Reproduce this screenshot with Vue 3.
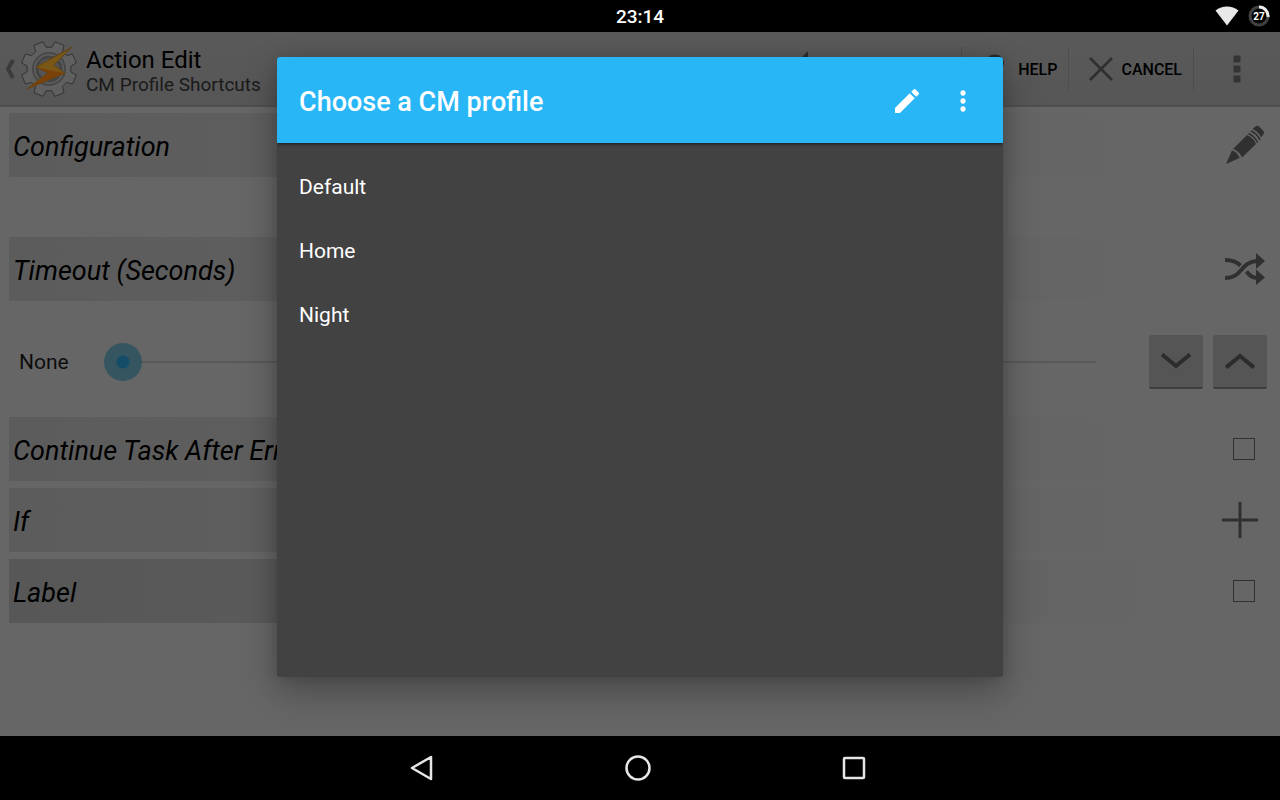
<template>
  <div class="screen">
    <!-- Status bar -->
    <header class="status-bar">
      <time class="clock">23:14</time>
      <div class="status-icons">
        <svg width="24" height="20" viewBox="0 0 24 20" aria-hidden="true">
          <path d="M0.5 4.5C7-1 17-1 23.500 4.500L12 19.500Z" fill="#e9e9e9" />
        </svg>
        <svg width="22" height="22" viewBox="0 0 22 22" role="img" aria-label="Battery 27%">
          <circle cx="11" cy="11" r="9" fill="none" stroke="#404040" stroke-width="3" />
          <path d="M11 2A9 9 0 0 1 20 12" fill="none" stroke="#eee" stroke-width="3" />
          <text x="11" y="15" text-anchor="middle" class="battery-text">27</text>
        </svg>
      </div>
    </header>

    <div class="content">
      <!-- Action bar -->
      <div class="action-bar">
        <a href="#" class="up-link" aria-label="Navigate up">
          <svg class="up-arrow" width="10" height="20" viewBox="0 0 10 20">
            <path d="M8 1L3 10L8 19" fill="none" stroke="#3b3b3b" stroke-width="4" />
          </svg>
          <svg width="58" height="58" viewBox="0 0 58 58">
            <path
              :d="gearPath"
              fill="#606060"
              stroke="#333"
              stroke-width="1"
              stroke-linejoin="round"
            />
            <circle cx="29" cy="29" r="16" fill="none" stroke="#484848" stroke-width="2" />
            <circle cx="29" cy="29" r="12" fill="#555" stroke="#454545" stroke-width="3" />
            <path d="M52 7L16 27L28 33L7 49L45 33L34 25Z" fill="#7a5717" stroke="#5b4319" />
            <path d="M18 28L45 33L7 49L28 33Z" fill="#7a4209" />
          </svg>
        </a>
        <div class="titles">
          <h1 class="title">Action Edit</h1>
          <p class="subtitle">CM Profile Shortcuts</p>
        </div>
        <div class="bar-actions">
          <button type="button" class="bar-button bar-back" aria-label="Back">
            <svg width="18" height="36" viewBox="0 0 18 36">
              <path d="M18 0V36L0 18Z" fill="#2c2c2c" />
            </svg>
          </button>
          <button type="button" class="bar-button">
            <svg width="28" height="30" viewBox="0 0 28 30">
              <path
                d="M6 10C6 4 9 2.500 13 2.500S20 5 20 9C20 14 13 14 13 20M13 24V28"
                fill="none"
                stroke="#2f2a28"
                stroke-width="4"
              />
            </svg>
            <span>HELP</span>
          </button>
          <button type="button" class="bar-button">
            <svg width="24" height="24" viewBox="0 0 24 24">
              <path d="M1 1L23 23M23 1L1 23" stroke="#2f2f2f" stroke-width="2.500" />
            </svg>
            <span>CANCEL</span>
          </button>
          <button type="button" class="bar-button bar-more" aria-label="More options">
            <svg width="8" height="28" viewBox="0 0 8 28">
              <path d="M0.500 0.500h7v7h-7zM0.500 10.500h7v7h-7zM0.500 20.500h7v7h-7z" fill="#343434" />
            </svg>
          </button>
        </div>
      </div>

      <!-- Form -->
      <main class="form">
        <section class="row">
          <h2 class="row-title">Configuration</h2>
          <button type="button" class="row-button" aria-label="Edit configuration">
            <svg width="40" height="40" viewBox="0 0 40 40" fill="#303030">
              <path d="M1 39L7 25.500C10.500 26.500 13.500 29.500 14.500 33Z" />
              <path d="M8 24L22 10C26 11.500 29.500 15 31 19L17 32.500C15.500 28.500 12 25 8 24Z" />
              <path
                d="M23.500 8.500Q29.500 11 32.500 17.500M26 6Q32 8.500 35 15"
                fill="none"
                stroke="#303030"
                stroke-width="1.600"
              />
              <path d="M27.500 4L30 2Q32 0 34 1.500L38 5.500Q40 7.500 38 10L36 12.500Q33.500 6.500 27.500 4Z" />
            </svg>
          </button>
        </section>

        <section class="row row-timeout">
          <h2 class="row-title">Timeout (Seconds)</h2>
          <button type="button" class="row-button" aria-label="Use variable">
            <svg width="40" height="32" viewBox="0 0 40 32">
              <g fill="none" stroke="#303030" stroke-width="4">
                <path d="M0 7C7 7 11 8 15.500 12.500" />
                <path d="M0 25C18 25 15 9 32 8" />
                <path d="M21.500 18.500C25 23 27 24.500 32 25" />
              </g>
              <path d="M31 0L40 8L31 16ZM31 16.500L40 24.500L31 32Z" fill="#303030" />
            </svg>
          </button>
        </section>

        <div class="seek">
          <label for="timeout" class="seek-label">None</label>
          <input id="timeout" v-model="timeout" type="range" min="0" max="100" class="seek-bar" />
          <div class="steppers">
            <button type="button" class="stepper" aria-label="Decrease" @click="step(-1)">
              <svg width="30" height="16" viewBox="0 0 30 16">
                <path d="M1 1.500L15 13L29 1.500" />
              </svg>
            </button>
            <button type="button" class="stepper" aria-label="Increase" @click="step(1)">
              <svg width="30" height="16" viewBox="0 0 30 16">
                <path d="M1 14.500L15 3L29 14.500" />
              </svg>
            </button>
          </div>
        </div>

        <section class="row">
          <label for="continue" class="row-title">Continue Task After Error</label>
          <input id="continue" v-model="continueAfterError" type="checkbox" class="tick" />
        </section>

        <section class="row">
          <h2 class="row-title">If</h2>
          <button type="button" class="row-button row-add" aria-label="Add condition">
            <svg width="36" height="36" viewBox="0 0 36 36">
              <path d="M18 0V36M0 18H36" stroke="#303030" stroke-width="3" />
            </svg>
          </button>
        </section>

        <section class="row row-dark">
          <label for="label" class="row-title">Label</label>
          <input id="label" v-model="hasLabel" type="checkbox" class="tick" />
        </section>
      </main>

      <!-- Profile dialog -->
      <div class="overlay">
        <div class="dialog" role="dialog" aria-labelledby="dialog-title">
          <div class="dialog-header">
            <h2 id="dialog-title" class="dialog-title">Choose a CM profile</h2>
            <button type="button" class="dialog-button" aria-label="Edit profiles">
              <svg width="32" height="32" viewBox="0 0 24 24" fill="#fff">
                <path
                  d="M3 17.250V21h3.750L17.810 9.940l-3.750-3.750L3 17.250zM20.710 7.040c.390-.390.390-1.020 0-1.410l-2.340-2.340c-.390-.390-1.020-.390-1.410 0l-1.830 1.830 3.750 3.750 1.830-1.830z"
                />
              </svg>
            </button>
            <button type="button" class="dialog-button" aria-label="More options">
              <svg width="32" height="32" viewBox="0 0 24 24" fill="#fff">
                <path
                  d="M12 8c1.100 0 2-.900 2-2s-.900-2-2-2-2 .900-2 2 .900 2 2 2zm0 2c-1.100 0-2 .900-2 2s.900 2 2 2 2-.900 2-2-.900-2-2-2zm0 6c-1.100 0-2 .900-2 2s.900 2 2 2 2-.900 2-2-.900-2-2-2z"
                />
              </svg>
            </button>
          </div>
          <ul class="profiles">
            <li v-for="profile in profiles" :key="profile">
              <button type="button" class="profile">{{ profile }}</button>
            </li>
          </ul>
        </div>
      </div>
    </div>

    <!-- Navigation bar -->
    <nav class="nav-bar">
      <button type="button" class="nav-button" aria-label="Back">
        <svg width="26" height="26" viewBox="0 0 26 26">
          <path d="M3 13L22 2V24Z" />
        </svg>
      </button>
      <button type="button" class="nav-button" aria-label="Home">
        <svg width="26" height="26" viewBox="0 0 26 26">
          <circle cx="13" cy="13" r="11.500" />
        </svg>
      </button>
      <button type="button" class="nav-button" aria-label="Recent apps">
        <svg width="26" height="26" viewBox="0 0 26 26">
          <rect x="3" y="3" width="20" height="20" rx="1" />
        </svg>
      </button>
    </nav>
  </div>
</template>

<script setup>
import { ref } from 'vue'

const profiles = ['Default', 'Home', 'Night']

const timeout = ref(0)
const continueAfterError = ref(false)
const hasLabel = ref(false)

const step = (delta) => {
  timeout.value = Math.min(100, Math.max(0, Number(timeout.value) + delta))
}

// Eight-toothed gear around (29, 29)
const buildGear = () => {
  const points = []
  const add = (radius, degrees) => {
    const a = (degrees * Math.PI) / 180
    points.push(`${(29 + radius * Math.cos(a)).toFixed(2)} ${(29 + radius * Math.sin(a)).toFixed(2)}`)
  }
  for (let i = 0; i < 8; i++) {
    const mid = i * 45 + 22.5
    add(22, mid - 15)
    add(28, mid - 10)
    add(28, mid + 10)
    add(22, mid + 15)
  }
  return `M${points.join('L')}Z`
}

const gearPath = buildGear()
</script>

<style>
body {
  margin: 0;
  background: #000;
}
</style>

<style scoped>
.screen {
  display: flex;
  flex-direction: column;
  min-height: 100vh;
  font-family: Roboto, sans-serif;
  color: #000;
}

h1,
h2,
p,
ul {
  margin: 0;
  padding: 0;
}

button {
  display: flex;
  align-items: center;
  padding: 0;
  border: 0;
  background: none;
  font-family: inherit;
  cursor: pointer;
}

/* Status bar */
.status-bar {
  display: grid;
  grid-template-columns: 1fr auto 1fr;
  align-items: center;
  height: 32px;
  background: #000;
}

.clock {
  grid-column: 2;
  color: #fff;
  font-size: 19px;
  font-weight: 500;
}

.status-icons {
  display: flex;
  align-items: center;
  justify-content: flex-end;
  gap: 9px;
  padding-right: 10px;
}

.battery-text {
  fill: #fff;
  font-size: 10px;
  font-weight: 700;
}

/* Content */
.content {
  position: relative;
  flex: 1;
  background: #666;
}

.action-bar {
  display: flex;
  align-items: center;
  box-sizing: border-box;
  height: 75px;
  border-bottom: 2px solid #4f4f4f;
  background: linear-gradient(#5a5a5a, #565656);
}

.up-link {
  display: flex;
  align-items: center;
  gap: 5px;
  padding-left: 5px;
}

.titles {
  flex: 1;
  padding: 4px 0 0 8px;
}

.title {
  font-size: 24px;
  font-weight: 400;
  line-height: 28px;
}

.subtitle {
  color: #1a1a1a;
  font-size: 19px;
  line-height: 22px;
}

.bar-actions {
  display: flex;
}

.bar-button {
  gap: 8px;
  box-sizing: border-box;
  height: 44px;
  padding: 0 11px 0 20px;
  border-right: 1px solid #4d4d4d;
  color: #000;
  font-size: 16px;
  font-weight: 500;
}

.bar-button span {
  padding-top: 2px;
}

.bar-back {
  width: 172px;
  padding-left: 0;
}

.bar-more {
  justify-content: center;
  width: 86px;
  padding: 0;
  border-right: 0;
}

/* Form rows */
.form {
  display: flex;
  flex-direction: column;
  gap: 7px;
  padding: 6px 9px;
}

.row {
  display: flex;
  align-items: center;
  justify-content: space-between;
  height: 64px;
  padding: 0 6px 0 4px;
  background: linear-gradient(to right, #5c5c5c, #666 95%);
}

.row-dark {
  background: linear-gradient(to right, #575757, #666 95%);
}

.row-title {
  padding-top: 4px;
  font-size: 27px;
  font-style: italic;
  font-weight: 400;
}

.row-timeout {
  margin-top: 53px;
}

.row-add {
  padding-right: 7px;
}

.tick {
  appearance: none;
  width: 22px;
  height: 22px;
  margin: 0 10px 0 0;
  border: 1px solid #303030;
}

.tick:checked {
  background: #303030;
}

.seek {
  display: flex;
  align-items: center;
  box-sizing: border-box;
  height: 102px;
  padding: 6px 0 0 10px;
}

.seek-label {
  width: 85px;
  font-size: 21px;
  color: #0d0d0d;
}

.seek-bar {
  appearance: none;
  flex: 1;
  height: 38px;
  margin: 0;
  background: linear-gradient(#595959, #595959) center / 100% 2px no-repeat;
}

.seek-bar::-webkit-slider-thumb {
  appearance: none;
  width: 38px;
  height: 38px;
  border-radius: 50%;
  background: radial-gradient(circle, #144d67 6px, #355561 7px);
}

.steppers {
  display: flex;
  gap: 10px;
  padding: 0 4px 0 53px;
}

.stepper {
  justify-content: center;
  box-sizing: border-box;
  width: 54px;
  height: 54px;
  border-bottom: 2px solid #3f3f3f;
  border-radius: 2px;
  background: #555;
}

.stepper path {
  fill: none;
  stroke: #2c2c2c;
  stroke-width: 4;
}

/* Dialog */
.overlay {
  position: absolute;
  inset: 0;
  display: flex;
  box-sizing: border-box;
  padding: 25px 277px 59px;
  overflow: hidden;
}

.dialog {
  flex: 1;
  border-radius: 3px;
  overflow: hidden;
  background: #424242;
  box-shadow: 0 14px 36px rgba(0, 0, 0, 0.3), 0 0 12px rgba(0, 0, 0, 0.12);
}

.dialog-header {
  position: relative;
  display: flex;
  align-items: center;
  gap: 24px;
  box-sizing: border-box;
  height: 86px;
  padding: 2px 24px 0 22px;
  background: #29b6f6;
  box-shadow: 0 1px 3px rgba(0, 0, 0, 0.6);
}

.dialog-title {
  flex: 1;
  padding-top: 2px;
  color: #fff;
  font-size: 27px;
  font-weight: 500;
}

.profiles {
  padding-top: 12px;
  list-style: none;
}

.profile {
  width: 100%;
  height: 64px;
  padding: 0 22px;
  color: #fff;
  font-size: 21px;
}

/* Navigation bar */
.nav-bar {
  display: flex;
  align-items: center;
  justify-content: center;
  gap: 190px;
  box-sizing: border-box;
  height: 64px;
  padding-right: 4px;
  background: #000;
}

.nav-button path,
.nav-button circle,
.nav-button rect {
  fill: none;
  stroke: #e6e6e6;
  stroke-width: 2.5;
  stroke-linejoin: round;
}
</style>
